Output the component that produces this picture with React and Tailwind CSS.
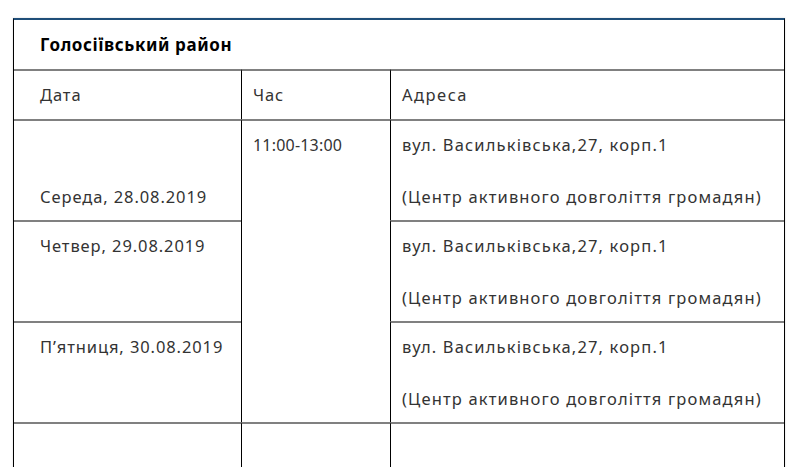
const days = [
  { date: 'Середа, 28.08.2019', pad: true },
  { date: 'Четвер, 29.08.2019' },
  { date: 'П’ятниця, 30.08.2019' },
];

function Address() {
  return (
    <div className="tracking-[1.15px]">
      <p className="leading-6">вул. Васильківська,27, корп.1</p>
      <p className="leading-6 mt-[28px]">(Центр активного довголіття громадян)</p>
    </div>
  );
}

export default function App() {
  return (
    <div className="min-h-[467px] bg-white pt-[18px] pl-[13px] font-['Noto_Sans',sans-serif] text-[16.5px] tracking-[0.9px] text-[#333]">
      <table className="w-[772px] table-fixed border-separate border-spacing-0 border-x border-black border-t-2 border-t-[#1f4e79] shadow-[0_0_2px_rgba(0,0,0,0.15)]">
        <colgroup>
          <col className="w-[227px]" />
          <col className="w-[149px]" />
          <col />
        </colgroup>
        <tbody>
          <tr>
            <td colSpan={3} className="h-[49px] pl-[26px] align-middle text-[17px] font-bold tracking-[0.6px] text-black">
              Голосіївський район
            </td>
          </tr>
          <tr>
            <td className="h-[50px] border-t-2 border-[#808080] pl-[26px] align-middle">Дата</td>
            <td className="border-t-2 border-l border-t-[#808080] border-l-black pl-[11px] align-middle">Час</td>
            <td className="border-t-2 border-l border-t-[#808080] border-l-black pl-[11px] align-middle tracking-[1.5px]">Адреса</td>
          </tr>
          {days.map((d, i) => (
            <tr key={d.date}>
              <td className="h-[101px] border-t-2 border-[#808080] pl-[26px] pt-[12px] align-top">
                {d.pad && <p className="leading-6 mb-[28px]">&nbsp;</p>}
                <p className="leading-6">{d.date}</p>
              </td>
              {i === 0 && (
                <td rowSpan={3} className="border-t-2 border-l border-t-[#808080] border-l-black pl-[11px] pt-[12px] align-top">
                  <p className="leading-6 text-[16px] tracking-[0.2px]">11:00-13:00</p>
                </td>
              )}
              <td className="border-t-2 border-l border-t-[#808080] border-l-black pl-[11px] pt-[12px] align-top">
                <Address />
              </td>
            </tr>
          ))}
          <tr>
            <td className="h-[60px] border-t-2 border-[#808080]"></td>
            <td className="border-t-2 border-l border-t-[#808080] border-l-black"></td>
            <td className="border-t-2 border-l border-t-[#808080] border-l-black"></td>
          </tr>
        </tbody>
      </table>
    </div>
  );
}
